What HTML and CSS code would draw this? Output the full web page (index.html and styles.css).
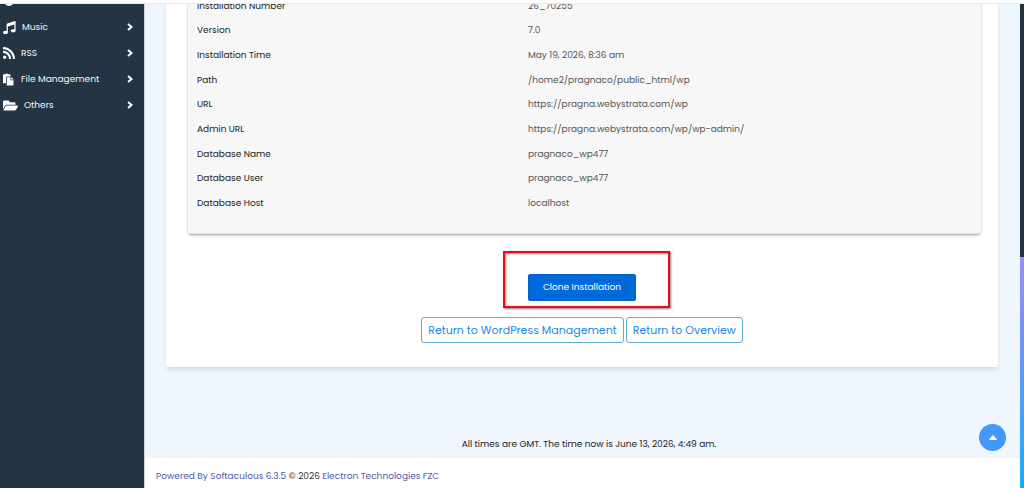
FILE: index.html
```html
<!DOCTYPE html>
<html lang="en">

<head>
    <meta charset="UTF-8">
    <meta name="viewport" content="width=device-width, initial-scale=1.0">
    <title>Softaculous</title>
    <link rel="stylesheet" href="styles.css">
</head>

<body>
    <header class="topbar"></header>
    <div class="layout">
        <nav class="sidebar">
            <a class="menu-item" href="#" aria-label="Games">
                <svg class="menu-icon" width="12" height="10" viewBox="0 0 12 10"><circle cx="6" cy="5" r="5" /></svg>
            </a>
            <a class="menu-item" href="#">
                <svg class="menu-icon" width="13" height="13" viewBox="0 0 512 512"><path d="M470.400 1.500l-304 96A32 32 0 0 0 144 128v264.600A146 146 0 0 0 96 384c-53 0-96 28.700-96 64s43 64 96 64 96-28.700 96-64V214.300l256-75v189.300A146 146 0 0 0 400 320c-53 0-96 28.700-96 64s43 64 96 64 96-28.700 96-64V32a32 32 0 0 0-41.600-30.500z" /></svg>
                <span class="menu-text">Music</span>
                <svg class="menu-arrow" width="6" height="8" viewBox="0 0 6 8"><path d="M1 1l3.500 3L1 7" /></svg>
            </a>
            <a class="menu-item" href="#">
                <svg class="menu-icon" width="12" height="12" viewBox="0 0 448 448"><path d="M128 384a64 64 0 1 1-128 0 64 64 0 0 1 128 0zM303.700 431c-8.400-155.400-133-278.900-287.400-287.400C7.100 143.200 0 150.500 0 159.600v48.100c0 8.400 6.500 15.500 14.900 16 111.800 7.300 201.500 96.700 208.800 208.800.5 8.400 7.600 14.900 16 14.900h48.100c9.100.1 16.400-7.200 15.900-16.400zM448 431.400C439.600 201.200 254.400 8.200 16.600 0 7.500-.3 0 7.100 0 16.200v48.100c0 8.600 6.800 15.600 15.500 16 191.200 7.800 344.600 161.300 352.500 352.500.3 8.600 7.300 15.500 16 15.500h48c9 0 16.400-7.500 16-16.900z" /></svg>
                <span class="menu-text">RSS</span>
                <svg class="menu-arrow" width="6" height="8" viewBox="0 0 6 8"><path d="M1 1l3.500 3L1 7" /></svg>
            </a>
            <a class="menu-item" href="#">
                <svg class="menu-icon" width="12" height="13" viewBox="0 0 512 512"><path d="M128 184c0-30.900 25.100-56 56-56h136V56c0-13.300-10.700-24-24-24h-80.600C204.300 12.900 183.600 0 160 0s-44.300 12.900-55.400 32H24C10.700 32 0 42.700 0 56v336c0 13.300 10.700 24 24 24h104V184zm216 104h104v200c0 13.300-10.700 24-24 24H184c-13.300 0-24-10.700-24-24V184c0-13.300 10.700-24 24-24h136v104c0 13.200 10.800 24 24 24zm104-38.100V256h-96v-96h6.100c6.300 0 12.400 2.500 17 7l65.900 65.900c4.500 4.600 7 10.700 7 17z" /></svg>
                <span class="menu-text">File Management</span>
                <svg class="menu-arrow" width="6" height="8" viewBox="0 0 6 8"><path d="M1 1l3.500 3L1 7" /></svg>
            </a>
            <a class="menu-item" href="#">
                <svg class="menu-icon" width="15" height="11" viewBox="0 0 576 400"><path d="M573 237L500 361a64 64 0 0 1-55 31H45c-18 0-30-20-20-36l72-124a64 64 0 0 1 55-32h399c19 0 31 21 22 37zM152 168h328v-48c0-26-22-48-48-48H272L208 8H48C22 8 0 30 0 56v278l70-119c17-29 48-47 82-47z" /></svg>
                <span class="menu-text">Others</span>
                <svg class="menu-arrow" width="6" height="8" viewBox="0 0 6 8"><path d="M1 1l3.500 3L1 7" /></svg>
            </a>
        </nav>

        <div class="page">
            <main class="content">
                <section class="card">
                    <div class="details">
                        <table class="details-table">
                            <tbody>
                                <tr><th scope="row">Installation Number</th><td>26_70255</td></tr>
                                <tr><th scope="row">Version</th><td>7.0</td></tr>
                                <tr><th scope="row">Installation Time</th><td>May 19, 2026, 8:36 am</td></tr>
                                <tr><th scope="row">Path</th><td>/home2/pragnaco/public_html/wp</td></tr>
                                <tr><th scope="row">URL</th><td>https://pragna.webystrata.com/wp</td></tr>
                                <tr><th scope="row">Admin URL</th><td>https://pragna.webystrata.com/wp/wp-admin/</td></tr>
                                <tr><th scope="row">Database Name</th><td>pragnaco_wp477</td></tr>
                                <tr><th scope="row">Database User</th><td>pragnaco_wp477</td></tr>
                                <tr><th scope="row">Database Host</th><td>localhost</td></tr>
                            </tbody>
                        </table>
                    </div>
                    <div class="clone-row">
                        <div class="clone-wrap">
                            <button class="btn-clone" type="button">Clone Installation</button>
                            <span class="highlight"></span>
                        </div>
                    </div>
                    <div class="return-row">
                        <a class="btn-return" href="#">Return to WordPress Management</a>
                        <a class="btn-return" href="#">Return to Overview</a>
                    </div>
                </section>
                <p class="times">All times are GMT. The time now is June 13, 2026, 4:49 am.</p>
                <button class="to-top" type="button" aria-label="Back to top">
                    <svg width="8" height="5" viewBox="0 0 8 5"><path d="M4 0l4 4.200Q8 5 7 5H1Q0 5 0 4.200z" /></svg>
                </button>
            </main>
            <footer class="footer">
                <a href="#">Powered By Softaculous 6.3.5</a> © 2026 <a href="#">Electron Technologies FZC</a>
            </footer>
        </div>

        <div class="edge">
            <div class="edge-dark"></div>
            <div class="edge-color"></div>
        </div>
    </div>
</body>

</html>
```
FILE: styles.css
```css
* {
    box-sizing: border-box;
}

body {
    margin: 0;
    font-family: Poppins, Inter, sans-serif;
    font-size: 9px;
    color: #222;
    background: #fff;
    overflow: hidden;
}

.topbar {
    position: fixed;
    top: 0;
    left: 0;
    right: 0;
    height: 4px;
    background: #fff;
    border-bottom: 1px solid #e9eaeb;
    z-index: 10;
}

.layout {
    display: flex;
    min-height: 100vh;
}

.sidebar {
    width: 145px;
    flex-shrink: 0;
    background: #253443;
    border-right: 1px solid #c9d3dc;
    overflow: hidden;
}

.menu-item {
    display: flex;
    align-items: center;
    gap: 6px;
    height: 26px;
    padding: 0 11px 0 3px;
    color: #f4f6f8;
    text-decoration: none;
}

.menu-item:first-child {
    margin-top: -12px;
}

.menu-icon {
    fill: #fff;
    flex-shrink: 0;
}

.menu-text {
    flex: 1;
}

.menu-arrow {
    fill: none;
    stroke: #fff;
    stroke-width: 2;
}

.page {
    flex: 1;
    display: flex;
    flex-direction: column;
    min-width: 0;
}

.content {
    flex: 1;
    display: flex;
    flex-direction: column;
    position: relative;
    padding: 0 22px 7px 21px;
    background: #f0f6fd;
}

.card {
    padding-bottom: 24px;
    background: #fff;
    border-radius: 2px;
    box-shadow: 0 3px 5px -1px rgba(0, 0, 0, 0.14);
}

.details {
    margin: -7px 16px 0 21px;
    padding: 0 9px 17px;
    background: #f7f7f7;
    border: 1px solid #e4e4e4;
    border-radius: 4px;
    box-shadow: 0 3px 3px -2px rgba(0, 0, 0, 0.4);
}

.details-table {
    width: 100%;
    height: 222px;
    border-collapse: collapse;
    table-layout: fixed;
}

.details-table th {
    width: 331px;
    padding: 0;
    font-weight: 400;
    text-align: left;
    color: #222;
}

.details-table td {
    padding: 0;
    color: #555;
}

.clone-row {
    display: flex;
    justify-content: center;
    padding-top: 40px;
}

.clone-wrap {
    position: relative;
}

.btn-clone {
    display: block;
    height: 27px;
    padding: 0 14px;
    font: inherit;
    color: #fff;
    background: #0069d9;
    border: 1px solid #0062cc;
    border-radius: 2px;
}

.highlight {
    position: absolute;
    top: -23px;
    right: -34px;
    bottom: -7px;
    left: -25px;
    border: 2px solid #f00a0a;
    box-shadow: 1px 1px 2px rgba(0, 0, 0, 0.5), inset 1px 1px 2px rgba(0, 0, 0, 0.4);
    pointer-events: none;
}

.return-row {
    display: flex;
    justify-content: center;
    gap: 2px;
    margin-top: 16px;
}

.btn-return {
    padding: 4px 6px;
    font-size: 11px;
    line-height: 16px;
    color: #1c87e5;
    border: 1px solid #62acd9;
    border-radius: 3px;
    text-decoration: none;
}

.times {
    margin: auto 0 0;
    padding-left: 14px;
    line-height: 14px;
    text-align: center;
}

.to-top {
    position: absolute;
    right: 14px;
    bottom: 7px;
    display: flex;
    align-items: center;
    justify-content: center;
    width: 27px;
    height: 27px;
    padding: 0;
    border: none;
    border-radius: 50%;
    background: #4299fb;
}

.to-top svg {
    fill: #fff;
}

.footer {
    padding: 11px 11px 5px;
    line-height: 14px;
    color: #333;
    background: #fff;
}

.footer a {
    color: #4f5bb0;
    text-decoration: none;
}

.edge {
    display: flex;
    flex-direction: column;
    width: 4px;
    flex-shrink: 0;
}

.edge-dark {
    flex: 257;
    background: #253443;
}

.edge-color {
    flex: 231;
    background: linear-gradient(#9d8cfa, #5b9bff 50%, #0fb0ff);
}
```
